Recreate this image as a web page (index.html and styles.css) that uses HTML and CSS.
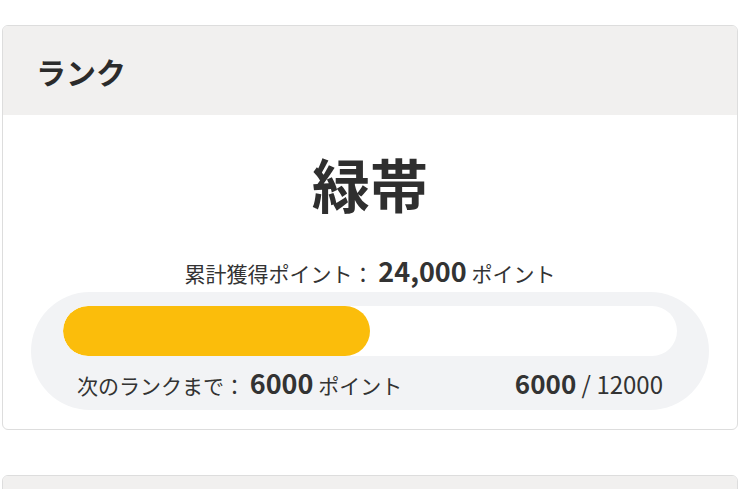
FILE: index.html
```html
<!DOCTYPE html>
<html lang="ja">
<head>
    <meta charset="UTF-8">
    <meta name="viewport" content="width=device-width, initial-scale=1.0">
    <title>ランク</title>
    <link rel="stylesheet" href="styles.css">
</head>
<body>
    <div class="card">
        <div class="card-header">
            <h2>ランク</h2>
        </div>
        <div class="card-body">
            <div class="rank-name">緑帯</div>
            <div class="total-points">累計獲得ポイント： <strong>24,000</strong> ポイント</div>
            <div class="progress-box">
                <div class="progress">
                    <div class="progress-fill" style="width: 50%"></div>
                </div>
                <div class="progress-info">
                    <div>次のランクまで： <strong>6000</strong> ポイント</div>
                    <div class="progress-count"><strong>6000</strong> / 12000</div>
                </div>
            </div>
        </div>
    </div>

    <div class="card">
        <div class="card-header"></div>
    </div>
</body>
</html>
```

FILE: styles.css
```css
body {
    font-family: "Noto Sans CJK JP", "Noto Sans", sans-serif;
    color: #333;
    background-color: #fff;
    margin: 0;
    padding: 25px 2px 0 2px;
}

.card {
    border: 1px solid #ddd;
    border-radius: 6px;
    background-color: #fff;
    overflow: hidden;
    margin-bottom: 45px;
}

.card-header {
    background-color: #f1f0ef;
    height: 89px;
    padding: 0 33px;
    display: flex;
    align-items: center;
}

.card-header h2 {
    margin: 0;
    font-size: 30px;
    font-weight: bold;
    color: #2b2b2b;
}

.card-body {
    padding: 31px 28px 19px 28px;
    text-align: center;
}

.rank-name {
    font-size: 58px;
    font-weight: bold;
    line-height: 75px;
    color: #2f2f2f;
}

.total-points {
    font-size: 21px;
    margin-top: 35px;
    line-height: 30px;
}

.total-points strong,
.progress-info strong {
    font-size: 27px;
}

.progress-box {
    background-color: #f2f3f5;
    border-radius: 60px;
    padding: 14px 32px 7px 32px;
    margin-top: 4px;
}

.progress {
    background-color: #fff;
    height: 50px;
    border-radius: 25px;
    overflow: hidden;
}

.progress-fill {
    height: 100%;
    background-color: #fbbd0b;
    border-radius: 25px;
}

.progress-info {
    display: flex;
    justify-content: space-between;
    align-items: baseline;
    font-size: 21px;
    padding: 9px 14px 0 14px;
    line-height: 36px;
}

.progress-info .progress-count {
    font-size: 24px;
}

.progress-info .progress-count strong {
    font-size: 26px;
}
```
